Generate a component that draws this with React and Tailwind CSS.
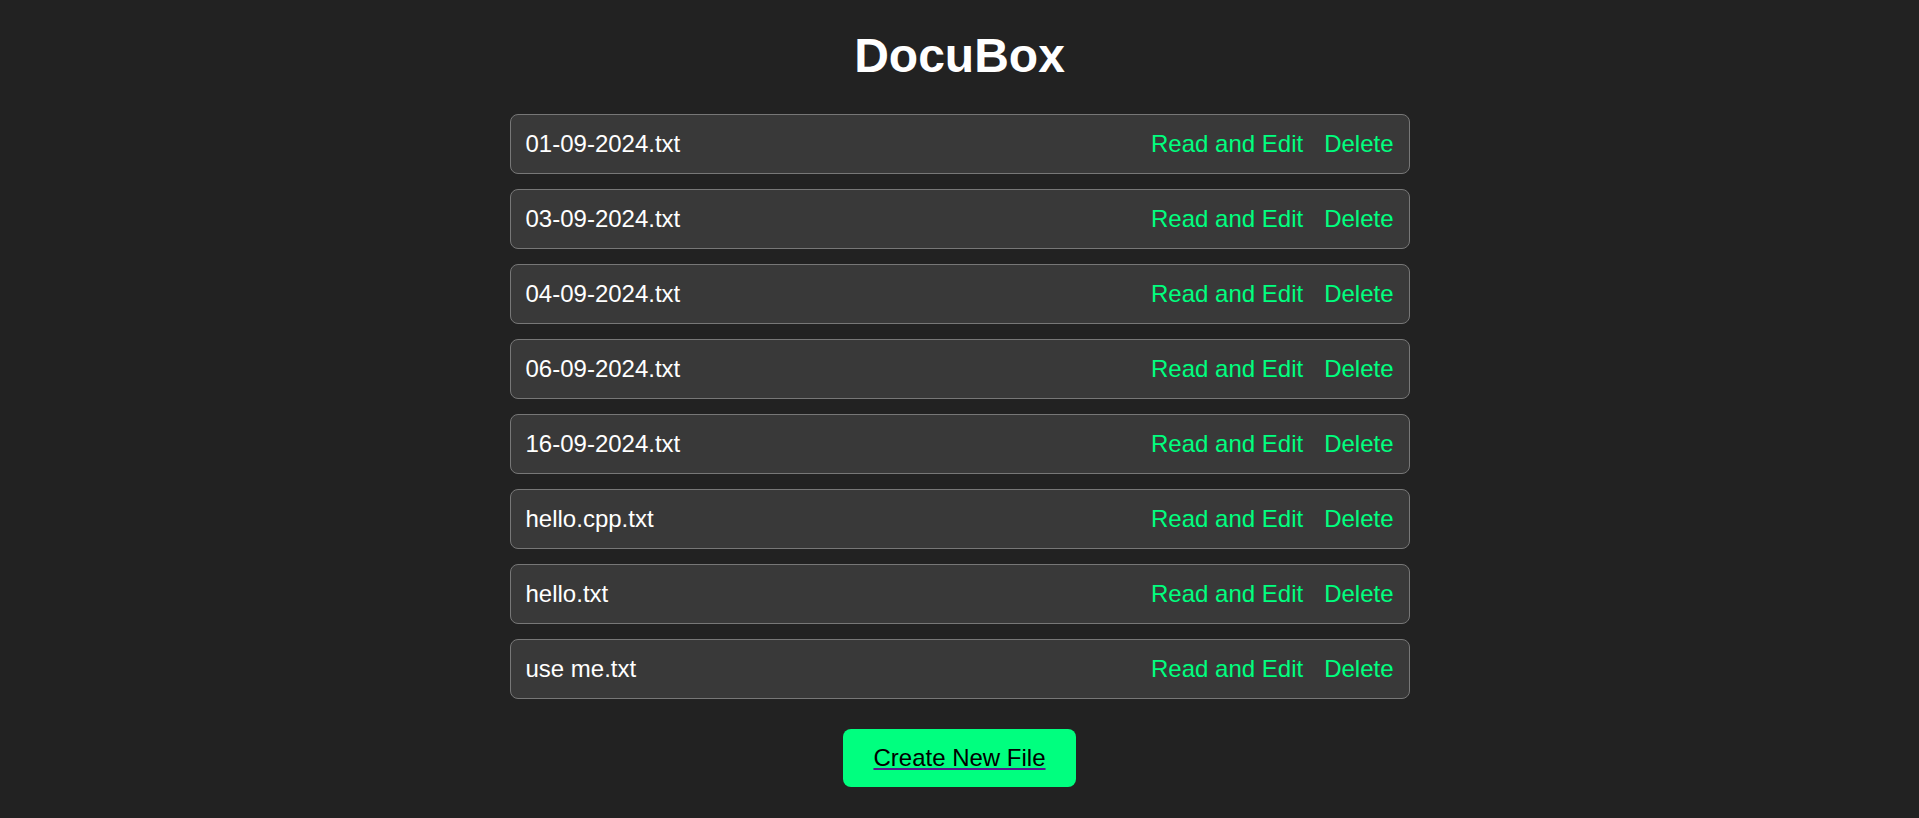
const files = [
  '01-09-2024.txt',
  '03-09-2024.txt',
  '04-09-2024.txt',
  '06-09-2024.txt',
  '16-09-2024.txt',
  'hello.cpp.txt',
  'hello.txt',
  'use me.txt',
];

function FileRow({ name }) {
  return (
    <li className="flex items-center justify-between rounded-lg border border-[#777] bg-[#393939] p-[15px] text-2xl leading-7">
      <span className="text-white">{name}</span>
      <div className="flex gap-[21px] text-[#00ff7f]">
        <a href="#edit">Read and Edit</a>
        <a href="#delete">Delete</a>
      </div>
    </li>
  );
}

export default function App() {
  return (
    <main className="flex min-h-screen flex-col items-center bg-[#222] px-5 pt-7 pb-8 font-['Liberation_Sans',Arial,sans-serif]">
      <h1 className="text-5xl leading-[56px] font-bold text-white">DocuBox</h1>
      <ul className="mt-[30px] flex w-full max-w-[900px] flex-col gap-[15px]">
        {files.map((name) => (
          <FileRow key={name} name={name} />
        ))}
      </ul>
      <button
        type="button"
        className="mt-[30px] rounded-lg bg-[#00ff7f] px-[30px] py-[15px] text-2xl leading-7 text-black underline decoration-[#551a8b] decoration-2 underline-offset-2"
      >
        Create New File
      </button>
    </main>
  );
}
